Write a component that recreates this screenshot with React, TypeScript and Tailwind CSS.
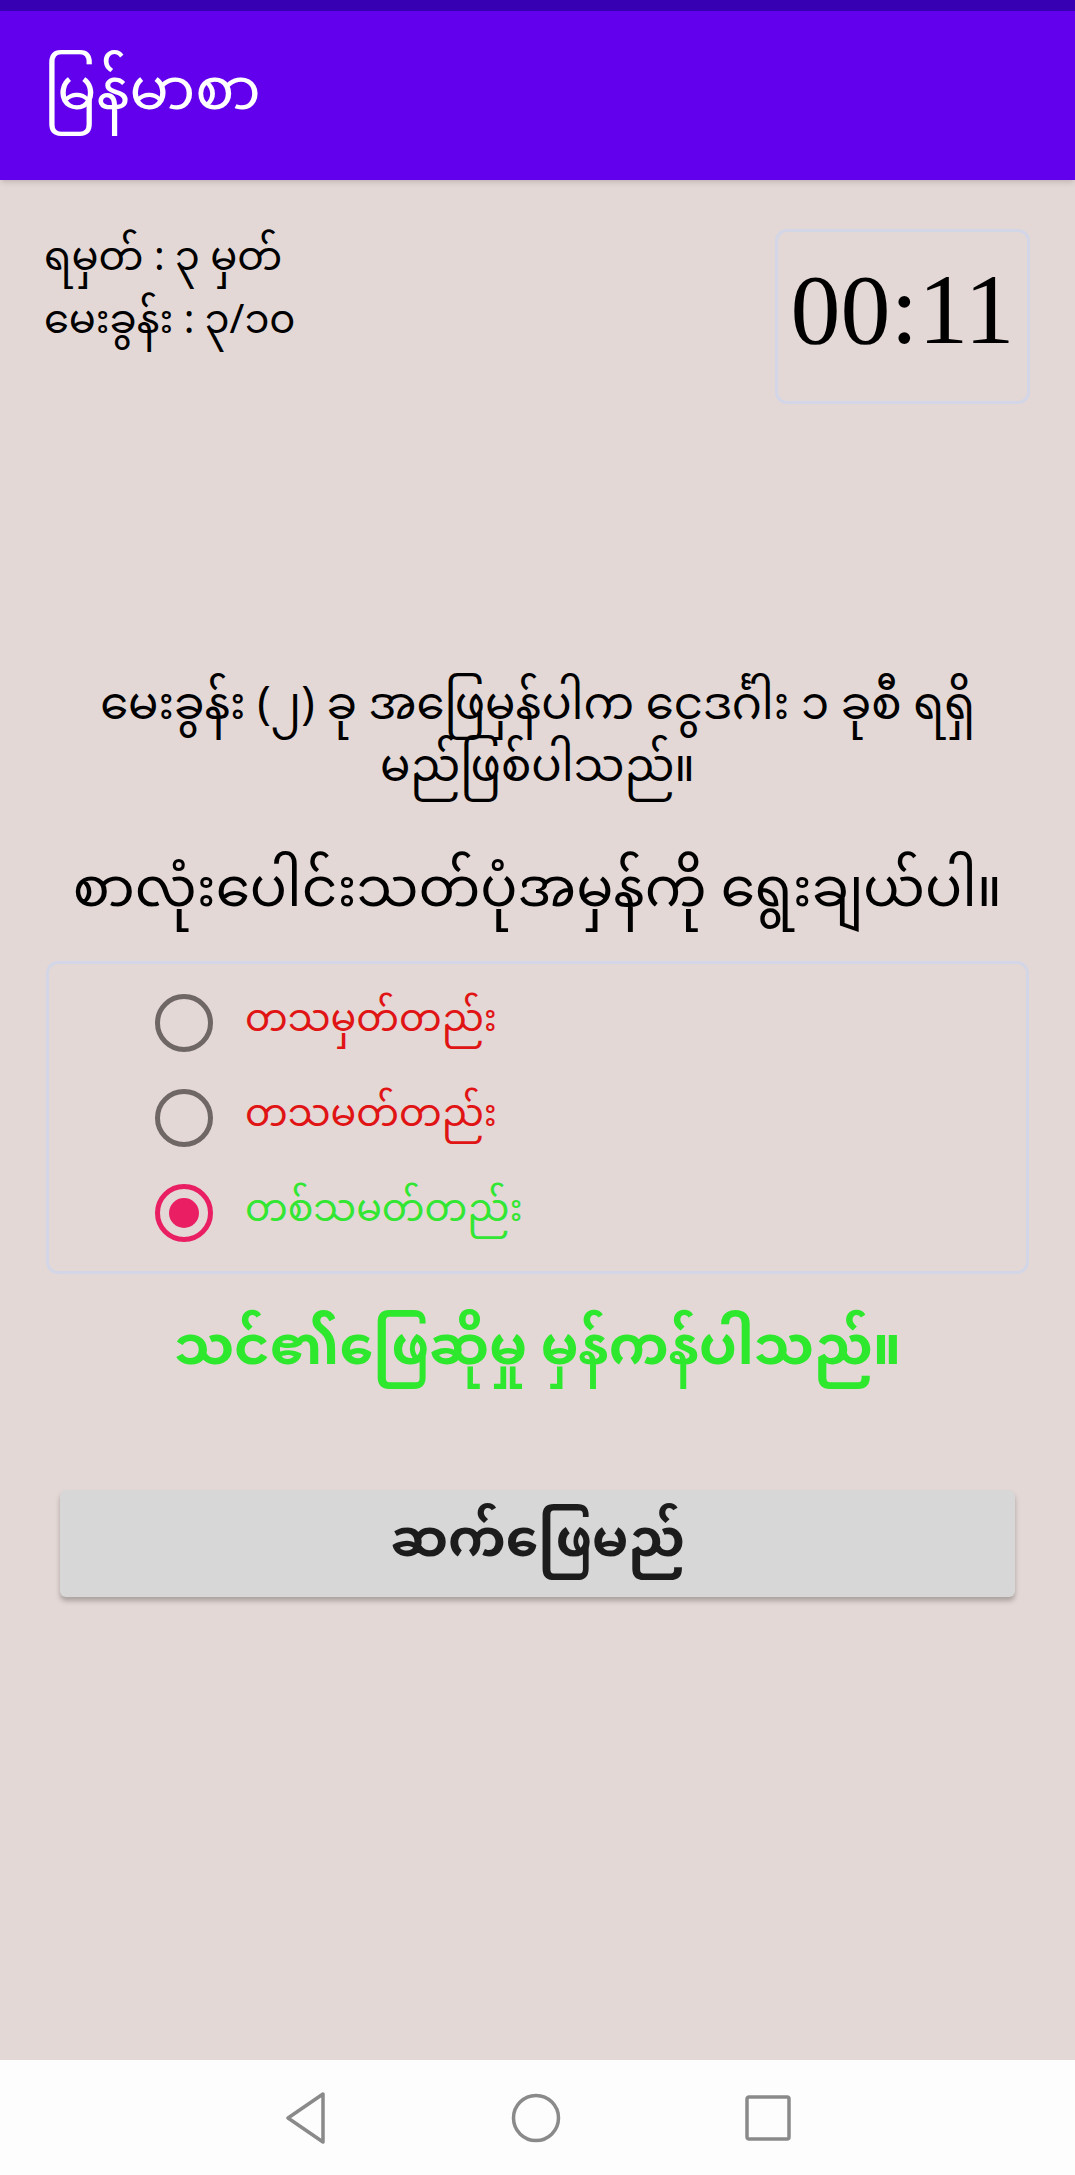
import { useState } from "react";

const font = { fontFamily: '"Noto Sans Myanmar", "Padauk", "Noto Sans", "DejaVu Sans", sans-serif' };

const options = ["တသမှတ်တည်း", "တသမတ်တည်း", "တစ်သမတ်တည်း"];

const Radio = ({ checked }: { checked: boolean }) =>
  checked ? (
    <span className="flex h-[58px] w-[58px] items-center justify-center rounded-full border-[5px] border-[#e91e63]">
      <span className="h-[30px] w-[30px] rounded-full bg-[#e91e63]" />
    </span>
  ) : (
    <span className="h-[58px] w-[58px] rounded-full border-[5px] border-[#6f6765]" />
  );

const NavBar = () => (
  <div className="flex h-[115px] items-center justify-center gap-[184px] bg-[#fdfdfd]">
    <svg width="42" height="52" viewBox="0 0 42 52" fill="none" stroke="#8a8a8a" strokeWidth="3.5" strokeLinejoin="round">
      <path d="M38 2 L3 26 L38 50 Z" />
    </svg>
    <svg width="50" height="50" viewBox="0 0 50 50" fill="none" stroke="#8a8a8a" strokeWidth="3.5">
      <circle cx="25" cy="25" r="22.5" />
    </svg>
    <svg width="46" height="46" viewBox="0 0 46 46" fill="none" stroke="#8a8a8a" strokeWidth="3.5">
      <rect x="2" y="2" width="42" height="42" rx="2" />
    </svg>
  </div>
);

export default function App() {
  const [selected, setSelected] = useState(2);

  return (
    <div className="flex h-[2175px] flex-col bg-[#e4d8d6]" style={font}>
      <div className="h-[11px] bg-[#3700b3]" />
      <header className="flex h-[169px] items-center bg-[#6200ee] px-[44px] shadow-md">
        <h1 className="text-[58px] leading-none text-white">မြန်မာစာ</h1>
      </header>

      <main className="flex flex-1 flex-col">
        <div className="flex items-start justify-between pl-[44px] pr-[45px] pt-[49px]">
          <div className="text-[40px] leading-[63px] text-black">
            <p>ရမှတ် : ၃ မှတ်</p>
            <p>မေးခွန်း : ၃/၁၀</p>
          </div>
          <div className="flex h-[175px] w-[255px] items-center justify-center rounded-[12px] border-[3px] border-[#d2d6e6] pb-[14px]">
            <span className="text-[100px] leading-none text-black" style={{ fontFamily: '"Liberation Serif", serif' }}>
              00:11
            </span>
          </div>
        </div>

        <p className="mx-auto mt-[274px] text-center text-[45px] leading-[62px] text-black">
          မေးခွန်း (၂) ခု အဖြေမှန်ပါက ငွေဒင်္ဂါး ၁ ခုစီ ရရှိ
          <br />
          မည်ဖြစ်ပါသည်။
        </p>

        <p className="mt-[56px] text-center text-[55px] leading-[70px] text-black">
          စာလုံးပေါင်းသတ်ပုံအမှန်ကို ရွေးချယ်ပါ။
        </p>

        <div className="mx-[46px] mt-[33px] flex h-[313px] flex-col justify-center gap-[37px] rounded-[12px] border-[3px] border-[#d2d6e6] pl-[106px]">
          {options.map((opt, i) => (
            <button
              key={opt}
              type="button"
              onClick={() => setSelected(i)}
              className="flex items-center gap-[32px] text-left"
            >
              <Radio checked={selected === i} />
              <span className={`text-[38px] leading-none ${i === 2 ? "text-[#33e633]" : "text-[#e01414]"}`}>{opt}</span>
            </button>
          ))}
        </div>

        <p className="mt-[43px] text-center text-[54px] font-bold leading-[70px] text-[#2ee82e]">
          သင်၏ဖြေဆိုမှု မှန်ကန်ပါသည်။
        </p>

        <div className="mt-[103px] px-[60px]">
          <button
            type="button"
            className="flex h-[107px] w-full items-center justify-center rounded-[6px] bg-[#d6d7d6] text-[52px] font-bold text-[#1c1c1c] shadow-[0_4px_5px_rgba(0,0,0,0.25)]"
          >
            ဆက်ဖြေမည်
          </button>
        </div>
      </main>

      <NavBar />
    </div>
  );
}
